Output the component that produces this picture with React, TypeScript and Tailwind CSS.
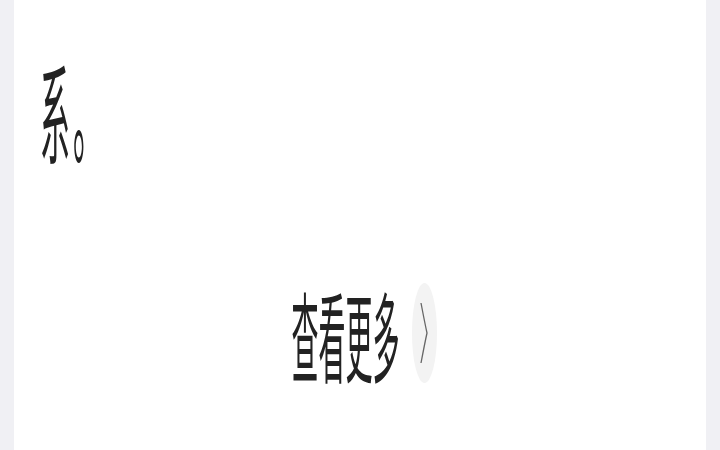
import React from "react";

const cjk = { fontFamily: '"Noto Sans CJK SC", "Noto Sans", sans-serif' };

export default function App() {
  return (
    <div className="flex h-[450px] w-[720px] overflow-hidden bg-[#f0f0f4] px-[14px]" style={cjk}>
      <div className="flex h-full flex-1 flex-col overflow-hidden bg-white">
        {/* tail of the paragraph */}
        <div className="mt-[55px] flex h-[108px] items-start pl-[26px]">
          <span className="inline-block origin-top scale-y-[3.6] text-[30px] leading-none text-[#222]">
            系
          </span>
          <span className="ml-[3px] inline-block origin-top scale-y-[3.6] text-[30px] leading-none text-[#222]">
            。
          </span>
        </div>

        {/* see more */}
        <div className="mt-[122px] flex items-start justify-center pl-[8px]">
          <span className="inline-block origin-top scale-y-[3.6] text-[27px] leading-none text-[#222]">
            查看更多
          </span>
          <div className="ml-[12px] mt-[-2px] flex h-[100px] w-[25px] items-center justify-center rounded-[50%] bg-[#f3f3f3]">
            <svg width="8" height="62" viewBox="0 0 8 62" preserveAspectRatio="none">
              <path d="M1 1 Q5 22 7 31 Q5 40 1 61" fill="none" stroke="#666" strokeWidth="1.3" />
            </svg>
          </div>
        </div>
      </div>
    </div>
  );
}
